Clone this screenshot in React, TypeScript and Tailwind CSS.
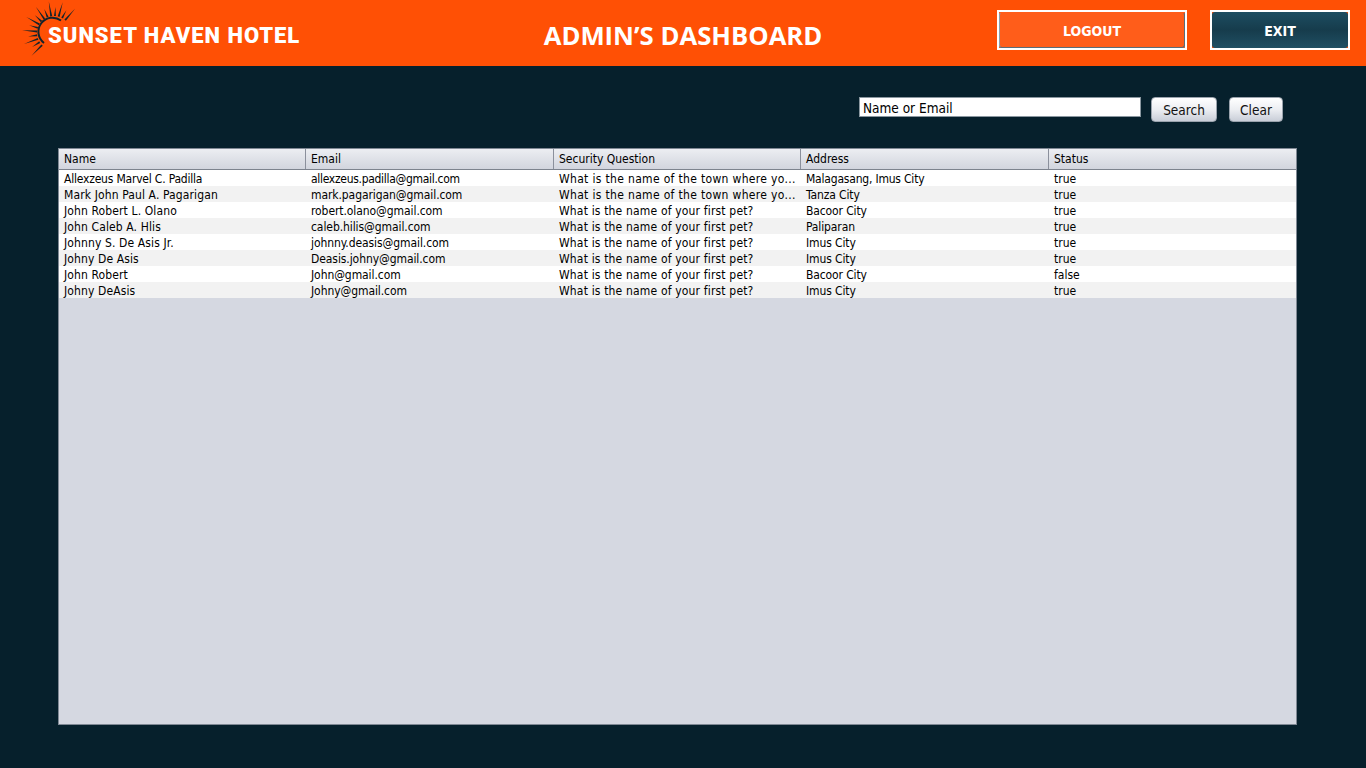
import React from "react";

const columns = ["Name", "Email", "Security Question", "Address", "Status"];

const town = "What is the name of the town where yo...";
const pet = "What is the name of your first pet?";

const rows = [
  ["Allexzeus Marvel C. Padilla", "allexzeus.padilla@gmail.com", town, "Malagasang, Imus City", "true"],
  ["Mark John Paul A. Pagarigan", "mark.pagarigan@gmail.com", town, "Tanza City", "true"],
  ["John Robert L. Olano", "robert.olano@gmail.com", pet, "Bacoor City", "true"],
  ["John Caleb A. Hlis", "caleb.hilis@gmail.com", pet, "Paliparan", "true"],
  ["Johnny S. De Asis Jr.", "johnny.deasis@gmail.com", pet, "Imus City", "true"],
  ["Johny De Asis", "Deasis.johny@gmail.com", pet, "Imus City", "true"],
  ["John Robert", "John@gmail.com", pet, "Bacoor City", "false"],
  ["Johny DeAsis", "Johny@gmail.com", pet, "Imus City", "true"],
];

const colWidths = ["w-[247px]", "w-[248px]", "w-[247px]", "w-[248px]", "flex-1"];
const colTracking = ["tracking-[0.12px]", "tracking-[-0.08px]", "tracking-[0.17px]", "tracking-[-0.12px]", ""];
const firstRowTracking = ["tracking-[-0.2px]", "tracking-[-0.3px]", "tracking-[0.33px]", "tracking-[-0.2px]", ""];

const SunLogo = () => {
  const cx = 39;
  const cy = 33;
  const rays = [];
  for (let i = 0; i < 15; i++) {
    const angle = (-49 - i * 12.6) * (Math.PI / 180);
    const tip = i % 2 === 0 ? 32 : 26;
    const base = 17;
    const nx = -Math.sin(angle);
    const ny = Math.cos(angle);
    const bx = cx + Math.cos(angle) * base;
    const by = cy + Math.sin(angle) * base;
    rays.push(
      <polygon
        key={i}
        points={`${bx + nx},${by + ny} ${cx + Math.cos(angle) * tip},${cy + Math.sin(angle) * tip} ${bx - nx},${by - ny}`}
        fill="#14232b"
      />
    );
  }
  return (
    <svg width="70" height="60" viewBox="0 0 70 60" className="absolute left-[15px] top-0">
      {rays}
      <path d="M 46 20.5 A 14 14 0 0 0 29 43" fill="none" stroke="#14232b" strokeWidth="2" />
    </svg>
  );
};

const App = () => {
  return (
    <div className="w-[1366px] h-[768px] overflow-hidden bg-[#06202c] flex flex-col font-['Liberation_Sans',sans-serif]">
      <header className="relative h-[66px] shrink-0 bg-[#ff5005] flex items-start">
        <SunLogo />
        <div className="relative ml-[48px] mt-[22px] w-[252px] text-white text-[22px] leading-[28px] font-black tracking-[1px] whitespace-nowrap font-['Roboto',sans-serif]">
          SUNSET HAVEN HOTEL
        </div>
        <h1 className="ml-[243px] mt-[19px] w-[280px] text-center text-white text-[25.7px] leading-[34px] font-bold whitespace-nowrap font-['Open_Sans',sans-serif]">
          ADMIN’S DASHBOARD
        </h1>
        <button className="ml-[174px] mt-[10px] w-[190px] h-[40px] border-2 border-white bg-[#ff5d1a] p-0 text-white text-[14px] font-bold font-['DejaVu_Sans_Condensed',sans-serif]">
          <span className="block h-full rounded-[3px] border border-[#5b6c78] border-t-[#ff5d1a] border-l-[#8aa0ae] leading-[36px]">LOGOUT</span>
        </button>
        <button className="ml-[23px] mt-[10px] w-[140px] h-[40px] border-2 border-white bg-[#ff5005] p-0 text-white text-[14px] font-bold font-['DejaVu_Sans_Condensed',sans-serif]">
          <span className="block h-full rounded-[3px] bg-gradient-to-b from-[#1d4d61] via-[#163c4c] to-[#1f4f63] leading-[38px]">EXIT</span>
        </button>
      </header>

      <main className="flex-1 flex flex-col pl-[58px] pr-[69px] pt-[31px] font-['DejaVu_Sans_Condensed',sans-serif]">
        <div className="flex items-start h-[51px] shrink-0 text-[14px] text-[#111]">
          <div className="ml-[801px] w-[282px] h-[20px] bg-white border border-[#8a97a0] pl-[3px] leading-[20px] text-black text-[13.5px] whitespace-nowrap">
            Name or Email
          </div>
          <button className="ml-[10px] w-[66px] h-[25px] rounded-[4px] border border-[#9aa3ad] bg-gradient-to-b from-white via-[#eceef2] to-[#c9ced8] text-[13.5px] leading-[25px]">
            Search
          </button>
          <button className="ml-[12px] w-[54px] h-[25px] rounded-[4px] border border-[#9aa3ad] bg-gradient-to-b from-white via-[#eceef2] to-[#c9ced8] text-[13.5px] leading-[25px]">
            Clear
          </button>
        </div>

        <div className="w-[1239px] h-[577px] border border-[#7f8894] bg-[#d5d8e1] text-[12px] text-black">
          <div className="flex h-[21px] bg-gradient-to-b from-[#eceef2] to-[#d2d5de] border-b border-[#7d838e]">
            {columns.map((c, i) => (
              <div
                key={c}
                className={`${colWidths[i]} pl-[5px] leading-[20px] whitespace-nowrap ${i < 4 ? "border-r border-[#8b909c]" : ""}`}
              >
                {c}
              </div>
            ))}
          </div>
          {rows.map((row, r) => (
            <div key={row[0]} className={`flex h-[16px] ${r % 2 === 0 ? "bg-white" : "bg-[#f2f2f2]"}`}>
              {row.map((cell, i) => (
                <div
                  key={i}
                  className={`${colWidths[i]} ${r === 0 ? firstRowTracking[i] : cell === town ? "tracking-[0.33px]" : colTracking[i]} pl-[5px] leading-[18px] whitespace-nowrap overflow-hidden`}
                >
                  {cell}
                </div>
              ))}
            </div>
          ))}
        </div>
      </main>
    </div>
  );
};

export default App;
